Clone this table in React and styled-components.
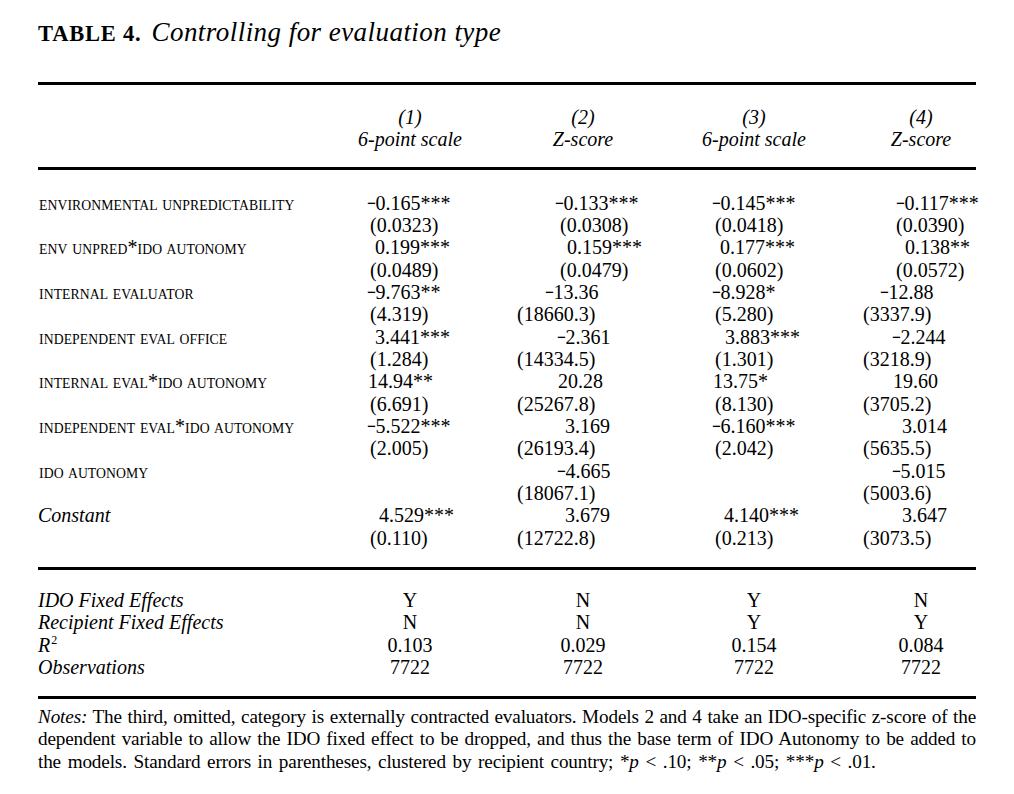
import React from 'react';
import styled, { createGlobalStyle } from 'styled-components';

const GlobalStyle = createGlobalStyle`
  html, body {
    margin: 0;
    padding: 0;
    background: #fff;
  }
  body {
    font-family: "Liberation Serif", "Times New Roman", serif;
    color: #000;
  }
`;

// label + four model columns; column centres sit at 410 / 583 / 754 / 921
const TRACKS = '258px 228px 118px 224px 110px';

const Page = styled.div`
  width: 938px;
  padding: 17px 0 0 38px;
`;

const Title = styled.h1`
  display: flex;
  align-items: baseline;
  gap: 10px;
  margin: 0;
  height: 30px;
  line-height: 30px;
  font-weight: normal;
`;

const TableNo = styled.span`
  font-size: 22.5px;
  font-weight: 700;
  letter-spacing: 0.8px;
`;

const Caption = styled.span`
  font-size: 27px;
  font-style: italic;
  letter-spacing: 0.45px;
`;

const Table = styled.div`
  margin-top: 35px;
  border-top: 3px solid #000;
  border-bottom: 3px solid #000;
`;

const Section = styled.div`
  padding: ${p => p.$pad};
  border-top: ${p => (p.$ruled ? '3px solid #000' : 'none')};
`;

const Row = styled.div`
  display: grid;
  grid-template-columns: ${TRACKS};
  align-items: baseline;
  font-size: 20px;
  line-height: ${p => p.$lh}px;
  white-space: nowrap;
`;

const HeadCell = styled.div`
  font-style: italic;
  text-align: center;
  line-height: 22.33px;
`;

const Label = styled.div`
  font-size: ${p => (p.$italic ? '20px' : '13.7px')};
  font-style: ${p => (p.$italic ? 'italic' : 'normal')};
  letter-spacing: ${p => (p.$italic ? '0' : '0.1px')};
  word-spacing: ${p => (p.$italic ? '0' : '1.5px')};
  padding-left: ${p => (p.$italic ? '0' : '1px')};
`;

const LabelStar = styled.span`
  font-size: 20px;
  line-height: 0;
  letter-spacing: 0;
`;

const ValueCell = styled.div`
  display: flex;
  flex-direction: column;
`;

const Line = styled.span`
  display: block;
  height: 22.33px;
  margin-left: ${p => p.$indent}px;
`;

const Minus = styled.span`
  display: inline-block;
  width: 8.5px;
  font-weight: 700;
  transform: scaleX(0.78);
  transform-origin: 0 50%;
`;

const Centered = styled.div`
  text-align: center;
`;

const FootLabel = styled.div`
  font-style: italic;
`;

const Sup = styled.sup`
  font-style: normal;
  font-size: 12px;
  line-height: 0;
  vertical-align: 8px;
  margin-left: 1px;
`;

const Notes = styled.div`
  margin-top: 7px;
  font-size: 19.2px;
  line-height: 22.5px;
  letter-spacing: -0.15px;
`;

const NoteLine = styled.div`
  text-align: ${p => (p.$justify ? 'justify' : 'left')};
  text-align-last: ${p => (p.$justify ? 'justify' : 'left')};
  word-spacing: ${p => (p.$justify ? '0' : '2px')};
  white-space: nowrap;
`;

const heads = [
  ['(1)', '6-point scale'],
  ['(2)', 'Z-score'],
  ['(3)', '6-point scale'],
  ['(4)', 'Z-score'],
];

const Star = () => <LabelStar>*</LabelStar>;

// [coefficient, indent, standard error, indent] per model; null = not estimated
const rows = [
  {
    label: <>ENVIRONMENTAL UNPREDICTABILITY</>,
    cells: [
      ['−0.165***', 71, '(0.0323)', 74],
      ['−0.133***', 31, '(0.0308)', 36],
      ['−0.145***', 70, '(0.0418)', 73],
      ['−0.117***', 30, '(0.0390)', 30],
    ],
  },
  {
    label: <>ENV UNPRED<Star />IDO AUTONOMY</>,
    cells: [
      ['0.199***', 79, '(0.0489)', 74],
      ['0.159***', 43, '(0.0479)', 36],
      ['0.177***', 78, '(0.0602)', 73],
      ['0.138**', 39, '(0.0572)', 30],
    ],
  },
  {
    label: <>INTERNAL EVALUATOR</>,
    cells: [
      ['−9.763**', 71, '(4.319)', 74],
      ['−13.36', 21, '(18660.3)', -7],
      ['−8.928*', 70, '(5.280)', 73],
      ['−12.88', 14, '(3337.9)', -3],
    ],
  },
  {
    label: <>INDEPENDENT EVAL OFFICE</>,
    cells: [
      ['3.441***', 79, '(1.284)', 74],
      ['−2.361', 33, '(14334.5)', -7],
      ['3.883***', 83, '(1.301)', 73],
      ['−2.244', 26, '(3218.9)', -3],
    ],
  },
  {
    label: <>INTERNAL EVAL<Star />IDO AUTONOMY</>,
    cells: [
      ['14.94**', 72, '(6.691)', 74],
      ['20.28', 34, '(25267.8)', -7],
      ['13.75*', 71, '(8.130)', 73],
      ['19.60', 27, '(3705.2)', -3],
    ],
  },
  {
    label: <>INDEPENDENT EVAL<Star />IDO AUTONOMY</>,
    cells: [
      ['−5.522***', 71, '(2.005)', 74],
      ['3.169', 41, '(26193.4)', -7],
      ['−6.160***', 70, '(2.042)', 73],
      ['3.014', 36, '(5635.5)', -3],
    ],
  },
  {
    label: <>IDO AUTONOMY</>,
    cells: [
      null,
      ['−4.665', 33, '(18067.1)', -7],
      null,
      ['−5.015', 26, '(5003.6)', -3],
    ],
  },
  {
    label: 'Constant',
    italic: true,
    cells: [
      ['4.529***', 83, '(0.110)', 74],
      ['3.679', 41, '(12722.8)', -7],
      ['4.140***', 82, '(0.213)', 73],
      ['3.647', 36, '(3073.5)', -3],
    ],
  },
];

const footRows = [
  ['IDO Fixed Effects', ['Y', 'N', 'Y', 'N']],
  ['Recipient Fixed Effects', ['N', 'N', 'Y', 'Y']],
  [<>R<Sup>2</Sup></>, ['0.103', '0.029', '0.154', '0.084']],
  ['Observations', ['7722', '7722', '7722', '7722']],
];

const Num = ({ text }) =>
  text.startsWith('−') ? (
    <>
      <Minus>−</Minus>
      {text.slice(1)}
    </>
  ) : (
    text
  );

const Cell = ({ data }) => {
  if (!data) return <ValueCell />;
  const [coef, ci, se, si] = data;
  return (
    <ValueCell>
      <Line $indent={ci}>
        <Num text={coef} />
      </Line>
      <Line $indent={si}>{se}</Line>
    </ValueCell>
  );
};

export default function App() {
  return (
    <>
      <GlobalStyle />
      <Page>
        <Title>
          <TableNo>TABLE 4.</TableNo>
          <Caption>Controlling for evaluation type</Caption>
        </Title>

        <Table>
          <Section $pad="21px 0 16px">
            <Row $lh={22.33}>
              <div />
              {heads.map(([n, kind]) => (
                <HeadCell key={n}>
                  {n}
                  <br />
                  {kind}
                </HeadCell>
              ))}
            </Row>
          </Section>

          <Section $ruled $pad="22px 0 18px">
            {rows.map((r, i) => (
              <Row key={i} $lh={22.33}>
                <Label $italic={r.italic}>{r.label}</Label>
                {r.cells.map((c, j) => (
                  <Cell key={j} data={c} />
                ))}
              </Row>
            ))}
          </Section>

          <Section $ruled $pad="18.6px 0 17.4px">
            {footRows.map(([label, vals], i) => (
              <Row key={i} $lh={22.5}>
                <FootLabel>{label}</FootLabel>
                {vals.map((v, j) => (
                  <Centered key={j}>{v}</Centered>
                ))}
              </Row>
            ))}
          </Section>
        </Table>

        <Notes>
          <NoteLine $justify>
            <i>Notes:</i> The third, omitted, category is externally contracted evaluators. Models 2 and 4 take an
            IDO-specific z-score of the
          </NoteLine>
          <NoteLine $justify>
            dependent variable to allow the IDO fixed effect to be dropped, and thus the base term of IDO Autonomy to be
            added to
          </NoteLine>
          <NoteLine>
            the models. Standard errors in parentheses, clustered by recipient country; *<i>p</i> &lt; .10; **<i>p</i>{' '}
            &lt; .05; ***<i>p</i> &lt; .01.
          </NoteLine>
        </Notes>
      </Page>
    </>
  );
}
